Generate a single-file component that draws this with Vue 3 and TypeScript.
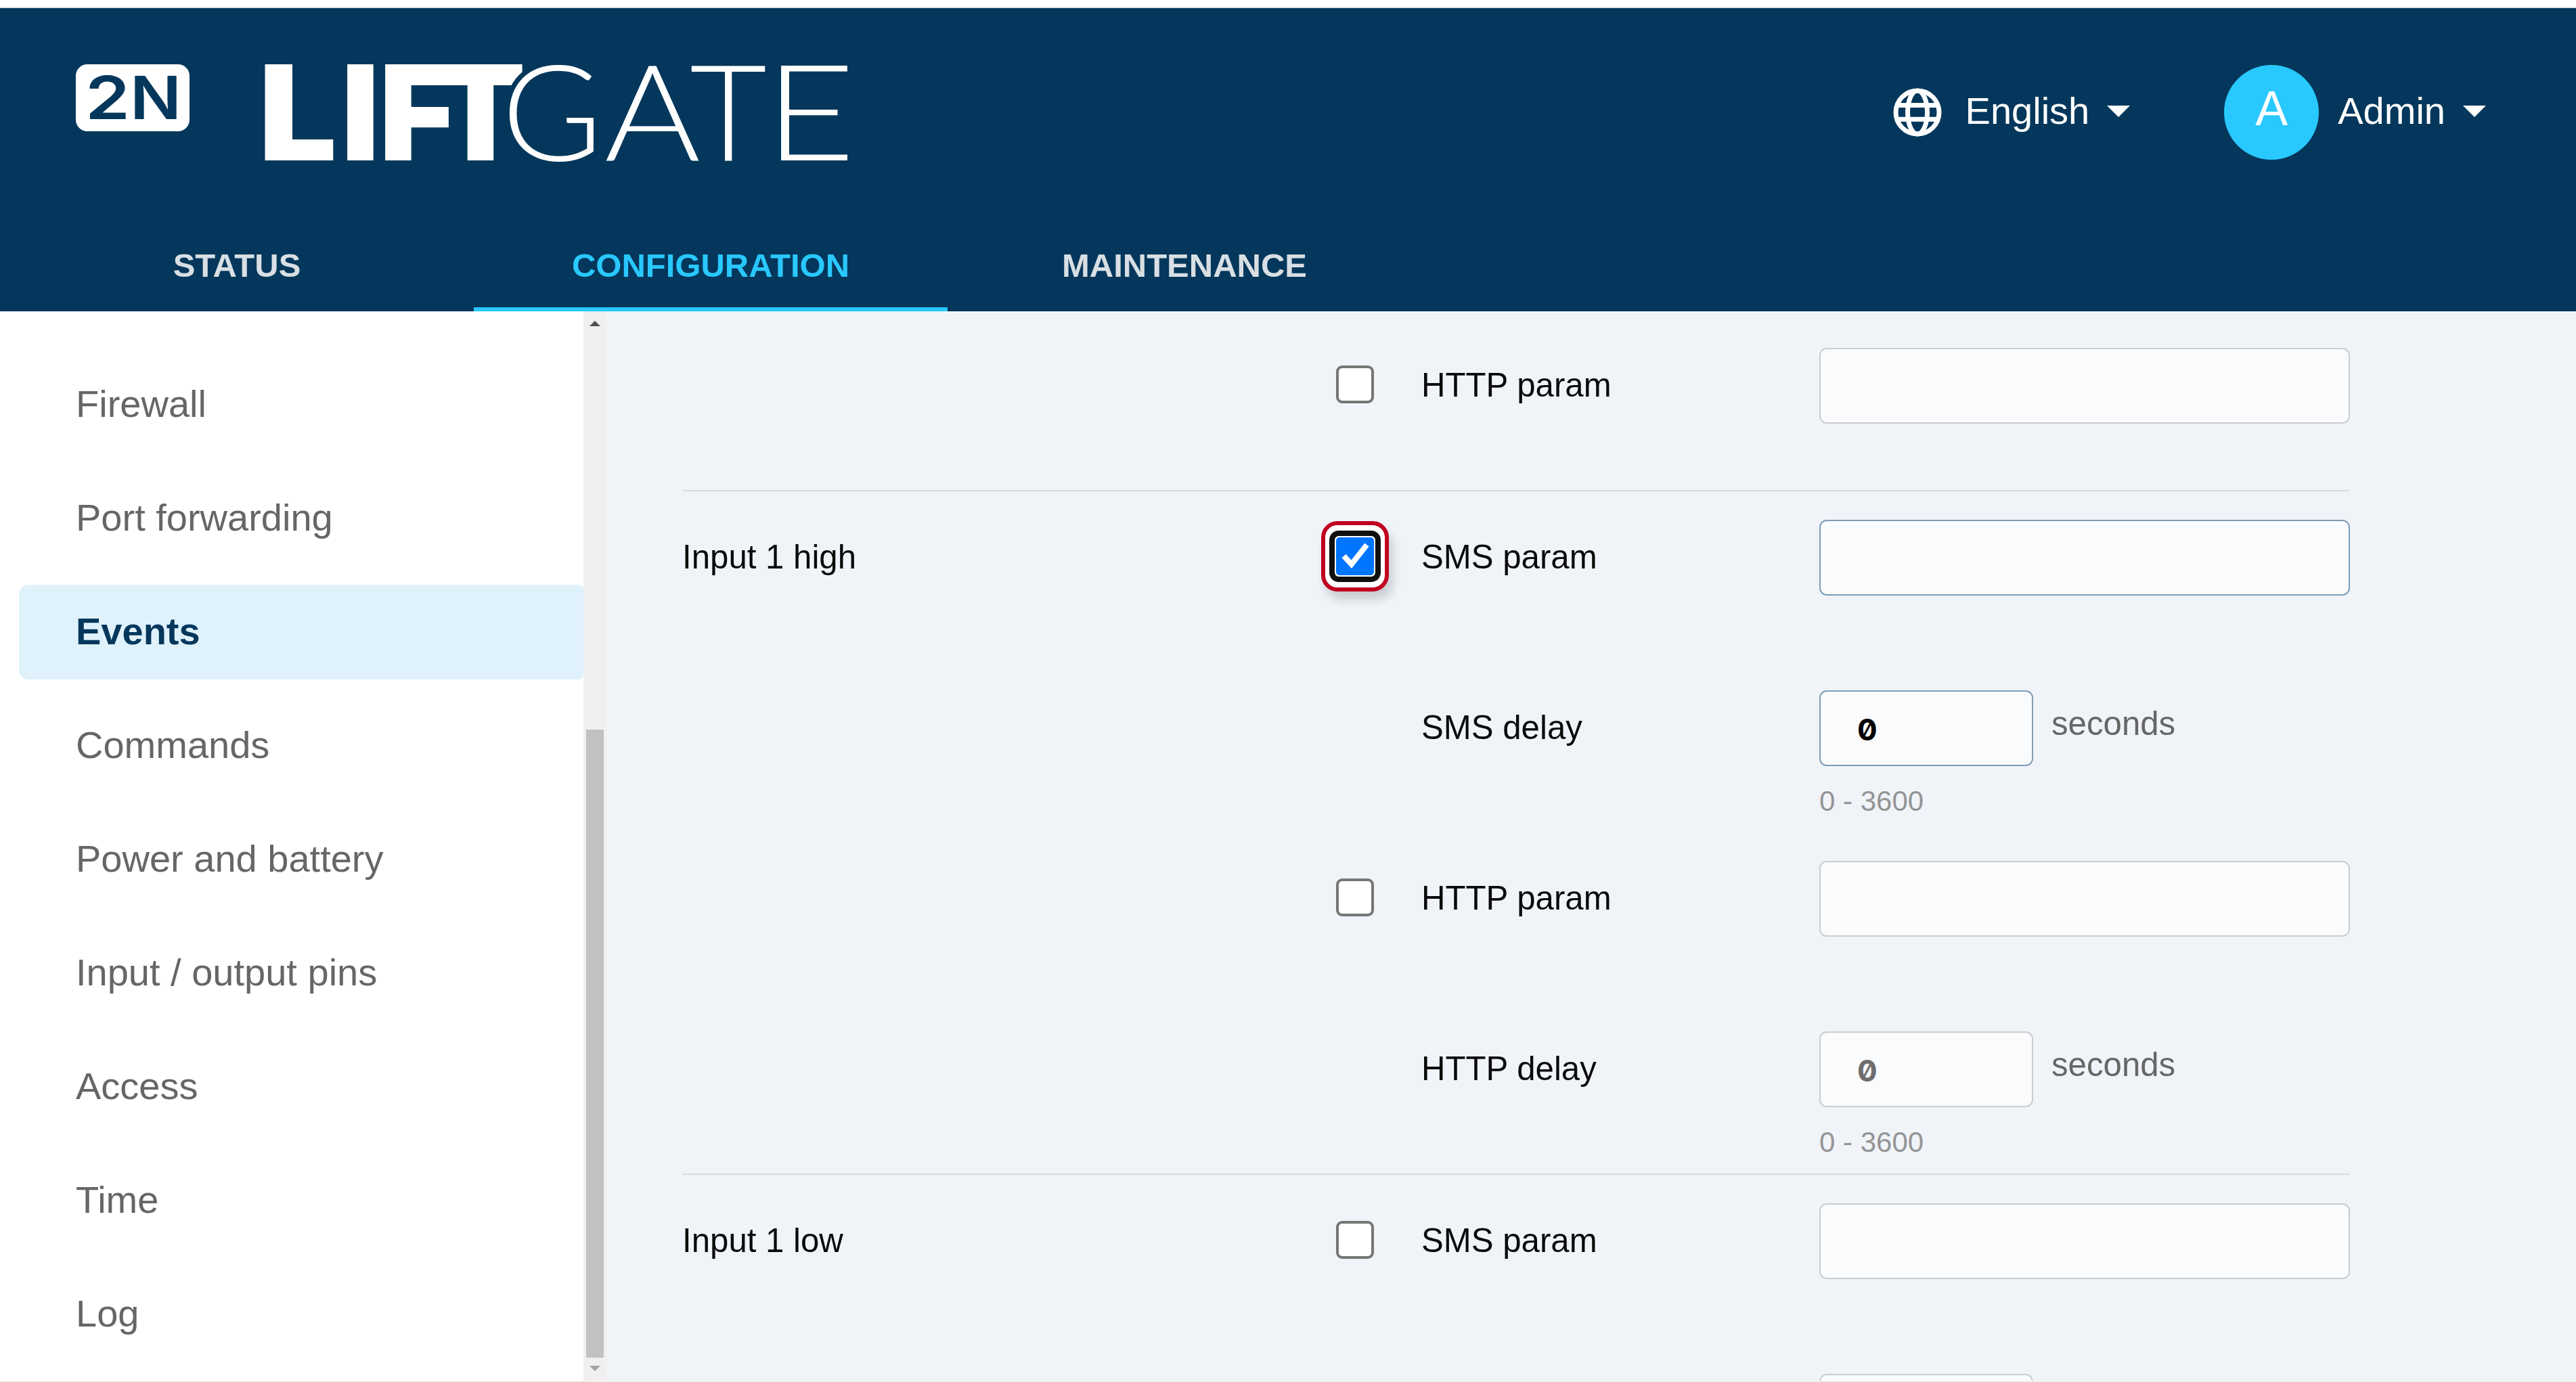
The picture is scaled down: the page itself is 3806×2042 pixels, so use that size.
<script setup lang="ts">
interface MenuItem {
  label: string
  active?: boolean
}

interface ParamRow {
  event?: string
  label: string
  checkbox?: boolean
  checked?: boolean
  kind: 'text' | 'delay'
  enabled?: boolean
}

const tabs: MenuItem[] = [
  { label: 'STATUS' },
  { label: 'CONFIGURATION', active: true },
  { label: 'MAINTENANCE' },
]

const menu: MenuItem[] = [
  { label: 'Firewall' },
  { label: 'Port forwarding' },
  { label: 'Events', active: true },
  { label: 'Commands' },
  { label: 'Power and battery' },
  { label: 'Input / output pins' },
  { label: 'Access' },
  { label: 'Time' },
  { label: 'Log' },
]

const groups: ParamRow[][] = [
  [{ label: 'HTTP param', checkbox: true, kind: 'text' }],
  [
    { event: 'Input 1 high', label: 'SMS param', checkbox: true, checked: true, kind: 'text', enabled: true },
    { label: 'SMS delay', kind: 'delay', enabled: true },
    { label: 'HTTP param', checkbox: true, kind: 'text' },
    { label: 'HTTP delay', kind: 'delay' },
  ],
  [
    { event: 'Input 1 low', label: 'SMS param', checkbox: true, kind: 'text' },
    { label: '', kind: 'delay' },
  ],
]
</script>

<template>
  <div class="app">
    <header class="header">
      <div class="topbar">
        <svg class="logo" viewBox="112 12 1180 314" width="1180" height="314">
          <rect x="112" y="95" width="168" height="99" rx="17" fill="#fff" />
          <text class="mark" x="126" y="176" textLength="66" lengthAdjust="spacingAndGlyphs">2</text>
          <text class="mark" x="192" y="176" textLength="76" lengthAdjust="spacingAndGlyphs">N</text>
          <g class="heavy">
            <text transform="translate(382 237) scale(1.05 1)">L</text>
            <text x="504" y="237">I</text>
            <text x="560" y="237">F</text>
            <text x="643" y="237">T</text>
          </g>
          <g class="light">
            <text class="cut" transform="translate(741 237) scale(1.03 1)">G</text>
            <text transform="translate(893 237) scale(1.1 1)">A</text>
            <text x="1019" y="237">T</text>
            <text transform="translate(1130 237) scale(1.17 1)">E</text>
          </g>
        </svg>
        <div class="account">
          <svg class="globe" viewBox="0 0 72 72" width="72" height="72">
            <g fill="none" stroke="#fff" stroke-width="7">
              <circle cx="36" cy="36" r="32" />
              <ellipse cx="36" cy="36" rx="14.5" ry="32" />
              <path d="M6 25.5H66M6 46.2H66" />
            </g>
          </svg>
          <span class="language">English</span>
          <svg class="caret" viewBox="0 0 34 17" width="34" height="17"><path d="M0 0H34L17 17Z" fill="#fff" /></svg>
          <span class="avatar">A</span>
          <span class="user">Admin</span>
          <svg class="caret" viewBox="0 0 34 17" width="34" height="17"><path d="M0 0H34L17 17Z" fill="#fff" /></svg>
        </div>
      </div>
      <nav class="tabs">
        <a v-for="t in tabs" :key="t.label" class="tab" :class="{ active: t.active }">{{ t.label }}</a>
      </nav>
    </header>

    <div class="body">
      <aside class="sidebar">
        <a v-for="m in menu" :key="m.label" class="item" :class="{ active: m.active }">{{ m.label }}</a>
      </aside>
      <div class="scrollbar">
        <svg viewBox="0 0 16 8" width="16" height="8"><path d="M0 8L8 0L16 8Z" fill="#505050" /></svg>
        <div class="thumb"></div>
        <svg viewBox="0 0 16 8" width="16" height="8"><path d="M0 0H16L8 8Z" fill="#a3a3a3" /></svg>
      </div>
      <main class="content">
        <section v-for="(g, gi) in groups" :key="gi" class="group">
          <div v-for="(r, ri) in g" :key="ri" class="row">
            <div class="label">{{ r.event }}</div>
            <div class="check-cell">
              <span v-if="r.checked" class="check checked">
                <svg viewBox="0 0 56 56" width="56" height="56">
                  <rect width="56" height="56" rx="5" fill="#0075ff" />
                  <path d="M11.5 27.5L22.8 39.8L45.5 11" fill="none" stroke="#fff" stroke-width="8" />
                </svg>
              </span>
              <span v-else-if="r.checkbox" class="check"></span>
            </div>
            <div class="label">{{ r.label }}</div>
            <div class="field">
              <div v-if="r.kind === 'text'" class="input" :class="{ enabled: r.enabled }"></div>
              <template v-else>
                <div class="delay">
                  <div class="input short" :class="{ enabled: r.enabled }">{{ r.label ? '0' : '' }}</div>
                  <span v-if="r.label" class="unit">seconds</span>
                </div>
                <div v-if="r.label" class="hint">0 - 3600</div>
              </template>
            </div>
          </div>
        </section>
      </main>
    </div>
    <div class="bottom-edge"></div>
  </div>
</template>

<style>
body {
  margin: 0;
  overflow: hidden;
}
</style>

<style scoped>
.app {
  box-sizing: border-box;
  width: 3806px;
  height: 2042px;
  padding-top: 10px;
  display: flex;
  flex-direction: column;
  overflow: hidden;
  background: #fff;
  font-family: "Liberation Sans", Arial, sans-serif;
}
.header {
  flex: none;
  box-sizing: border-box;
  height: 450px;
  border-top: 2px solid #e8e4dc;
  background: #04375b;
}
.topbar {
  height: 314px;
  display: flex;
  justify-content: space-between;
  align-items: flex-start;
  box-sizing: border-box;
  padding: 0 133px 0 112px;
}
.logo {
  display: block;
}
.mark {
  font: 600 88px "Inter", sans-serif;
  fill: #04375b;
}
.heavy {
  font: 900 195px "Inter", sans-serif;
  fill: #fff;
}
.light {
  font: 300 197px "Lato", sans-serif;
  fill: #fff;
}
.cut {
  paint-order: stroke;
  stroke: #04375b;
  stroke-width: 14px;
}
.account {
  display: flex;
  align-items: center;
  height: 140px;
  margin-top: 84px;
  color: #fff;
  font-size: 56px;
}
.globe {
  margin-right: 35px;
}
.language,
.user {
  line-height: 64px;
  padding-bottom: 4px;
}
.caret {
  margin-left: 26px;
  margin-bottom: 3px;
}
.avatar {
  width: 140px;
  height: 140px;
  margin: 0 28px 0 139px;
  border-radius: 50%;
  background: #29c8ff;
  font-size: 72px;
  line-height: 128px;
  text-align: center;
}
.tabs {
  display: flex;
  height: 134px;
}
.tab {
  box-sizing: border-box;
  width: 700px;
  border-bottom: 6px solid transparent;
  padding-top: 5px;
  line-height: 122px;
  text-align: center;
  font-size: 49px;
  font-weight: 700;
  color: #d8dfe4;
}
.tab.active {
  color: #29c8ff;
  border-color: #29c8ff;
}
.body {
  flex: 1;
  min-height: 0;
  display: flex;
}
.sidebar {
  width: 862px;
  box-sizing: border-box;
  padding: 68px 0 0 28px;
  display: flex;
  flex-direction: column;
  gap: 28px;
  overflow: hidden;
}
.item {
  flex: none;
  box-sizing: border-box;
  height: 140px;
  padding-left: 84px;
  border-radius: 14px 8px 8px 14px;
  font-size: 56px;
  line-height: 137px;
  color: #666;
}
.item.active {
  background: #dff2fc;
  color: #04375b;
  font-weight: 700;
}
.scrollbar {
  width: 34px;
  box-sizing: border-box;
  padding: 14px 4px;
  display: flex;
  flex-direction: column;
  align-items: center;
  background: #f0f0f0;
}
.scrollbar svg {
  flex: none;
  display: block;
}
.thumb {
  width: 26px;
  height: 928px;
  margin: auto 0 12px;
  background: #c1c1c1;
}
.content {
  flex: 1;
  padding: 12px 334px 0 112px;
  background: #f0f4f9;
  overflow: hidden;
}
.group {
  border-bottom: 2px solid #d9dadc;
}
.row {
  height: 252px;
  display: grid;
  grid-template-columns: 966px 126px 588px 784px;
  align-items: start;
}
.label {
  margin-top: 47px;
  height: 100px;
  line-height: 100px;
  font-size: 49.2px;
  color: #0a0a0a;
}
.check {
  position: relative;
  display: block;
  box-sizing: border-box;
  width: 56px;
  height: 56px;
  margin-top: 68px;
  border: 4px solid #767676;
  border-radius: 9px;
  background: #fff;
}
.check.checked {
  border: 0;
  background: none;
  z-index: 0;
}
.check.checked svg {
  display: block;
}
/* focus ring */
.check.checked::before {
  content: "";
  position: absolute;
  z-index: -1;
  inset: -10px;
  box-sizing: border-box;
  border: 8px solid #101010;
  border-radius: 14px;
}
/* callout frame around the focused checkbox */
.check.checked::after {
  content: "";
  position: absolute;
  z-index: -2;
  left: -22px;
  top: -24px;
  width: 100px;
  height: 104px;
  box-sizing: border-box;
  border: 6px solid #c1001f;
  border-radius: 24px;
  background: #fff;
  box-shadow: 6px 12px 14px rgba(0, 0, 0, 0.16);
}
.input {
  box-sizing: border-box;
  height: 112px;
  border: 2px solid #cbccce;
  border-radius: 11px;
  background: #fafbfd;
}
.field {
  padding-top: 42px;
}
.input.enabled {
  border-color: #7f9cb5;
  color: #000;
}
.input.short {
  width: 316px;
  padding-left: 54px;
  font: 700 44px/112px "Inter", sans-serif;
  font-feature-settings: "zero";
  color: #6d6d6d;
}
.input.short.enabled {
  color: #000;
}
.delay {
  display: flex;
}
.unit {
  margin-left: 27px;
  line-height: 98px;
  font-size: 49.2px;
  color: #666;
}
.hint {
  margin-top: 26px;
  line-height: 52px;
  font-size: 42px;
  color: #949494;
}
.bottom-edge {
  flex: none;
  height: 2px;
  background: #f0f0f0;
}
</style>
